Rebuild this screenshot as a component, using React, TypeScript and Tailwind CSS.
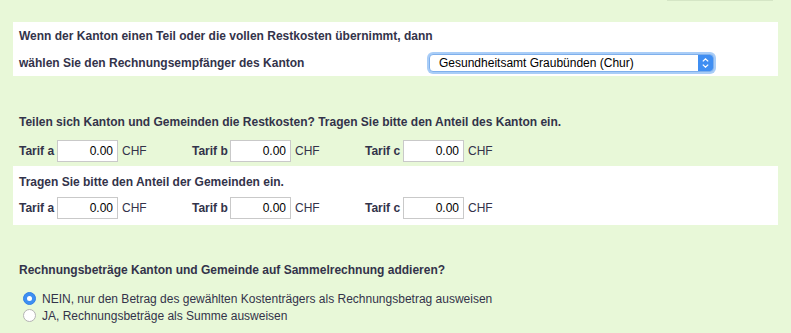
import { useState } from "react";

const font = { fontFamily: '"Liberation Sans", Arial, sans-serif' };

function TarifField({ label, value }: { label: string; value: string }) {
  return (
    <div className="flex items-center w-[173px] shrink-0">
      <span className="font-bold w-[38px]">{label}</span>
      <input
        className="w-[61px] h-[22px] border border-[#c9c9c9] bg-white text-right pr-[4px] text-[12px] text-black outline-none"
        defaultValue={value}
      />
      <span className="ml-[4px]">CHF</span>
    </div>
  );
}

function TarifRow() {
  return (
    <div className="flex items-center">
      <TarifField label="Tarif a" value="0.00" />
      <TarifField label="Tarif b" value="0.00" />
      <TarifField label="Tarif c" value="0.00" />
    </div>
  );
}

function Radio({ checked, label, onClick }: { checked: boolean; label: string; onClick: () => void }) {
  return (
    <div className="flex items-center h-[17px] cursor-pointer" onClick={onClick}>
      <span
        className={
          checked
            ? "w-[13px] h-[13px] rounded-full bg-[#3d8ff2] border border-[#3180e6] flex items-center justify-center ml-[4px] mr-[6px]"
            : "w-[13px] h-[13px] rounded-full bg-white border border-[#b4b4b4] ml-[4px] mr-[6px]"
        }
      >
        {checked && <span className="w-[5px] h-[5px] rounded-full bg-white" />}
      </span>
      <span>{label}</span>
    </div>
  );
}

export default function App() {
  const [sum, setSum] = useState(false);

  return (
    <div className="w-[791px] h-[333px] bg-[#e8f8d8] text-[12px] text-[#33334a] overflow-hidden" style={font}>
      <div className="h-[22px] flex justify-end">
        <div className="w-[106px] h-[1px] bg-[#d5e6c6] mr-[18px]" />
      </div>

      <div className="mx-[13px] bg-white px-[6px]">
        <div className="h-[27px] flex items-center font-bold">
          Wenn der Kanton einen Teil oder die vollen Restkosten übernimmt, dann
        </div>
        <div className="h-[27px] flex items-center">
          <span className="font-bold w-[408px]">wählen Sie den Rechnungsempfänger des Kanton</span>
          <div className="w-[289px] h-[22px] rounded-[6px] bg-[#a9cdf7] p-[2px]">
            <div className="h-full rounded-[4px] bg-white border border-[#7fb0ec] flex items-center overflow-hidden">
              <span className="flex-1 pl-[9px] text-black">Gesundheitsamt Graubünden (Chur)</span>
              <div className="w-[15px] h-full bg-[#3f8ef2] flex flex-col items-center justify-center gap-[2px]">
                <svg width="7" height="4" viewBox="0 0 7 4">
                  <path d="M0.8 3.4 L3.5 0.8 L6.2 3.4" fill="none" stroke="white" strokeWidth="1.2" />
                </svg>
                <svg width="7" height="4" viewBox="0 0 7 4">
                  <path d="M0.8 0.6 L3.5 3.2 L6.2 0.6" fill="none" stroke="white" strokeWidth="1.2" />
                </svg>
              </div>
            </div>
          </div>
        </div>
      </div>

      <div className="px-[19px] pt-[36px]">
        <div className="h-[20px] flex items-center font-bold">
          Teilen sich Kanton und Gemeinden die Restkosten? Tragen Sie bitte den Anteil des Kanton ein.
        </div>
        <div className="pt-[8px] pb-[4px]">
          <TarifRow />
        </div>
      </div>

      <div className="mx-[13px] bg-white px-[6px] pb-[6px]">
        <div className="h-[31px] flex items-center font-bold">Tragen Sie bitte den Anteil der Gemeinden ein.</div>
        <TarifRow />
      </div>

      <div className="px-[19px] pt-[35px]">
        <div className="h-[20px] flex items-center font-bold">
          Rechnungsbeträge Kanton und Gemeinde auf Sammelrechnung addieren?
        </div>
        <div className="pt-[10px]">
          <Radio
            checked={!sum}
            onClick={() => setSum(false)}
            label="NEIN, nur den Betrag des gewählten Kostenträgers als Rechnungsbetrag ausweisen"
          />
          <Radio checked={sum} onClick={() => setSum(true)} label="JA, Rechnungsbeträge als Summe ausweisen" />
        </div>
      </div>
    </div>
  );
}
